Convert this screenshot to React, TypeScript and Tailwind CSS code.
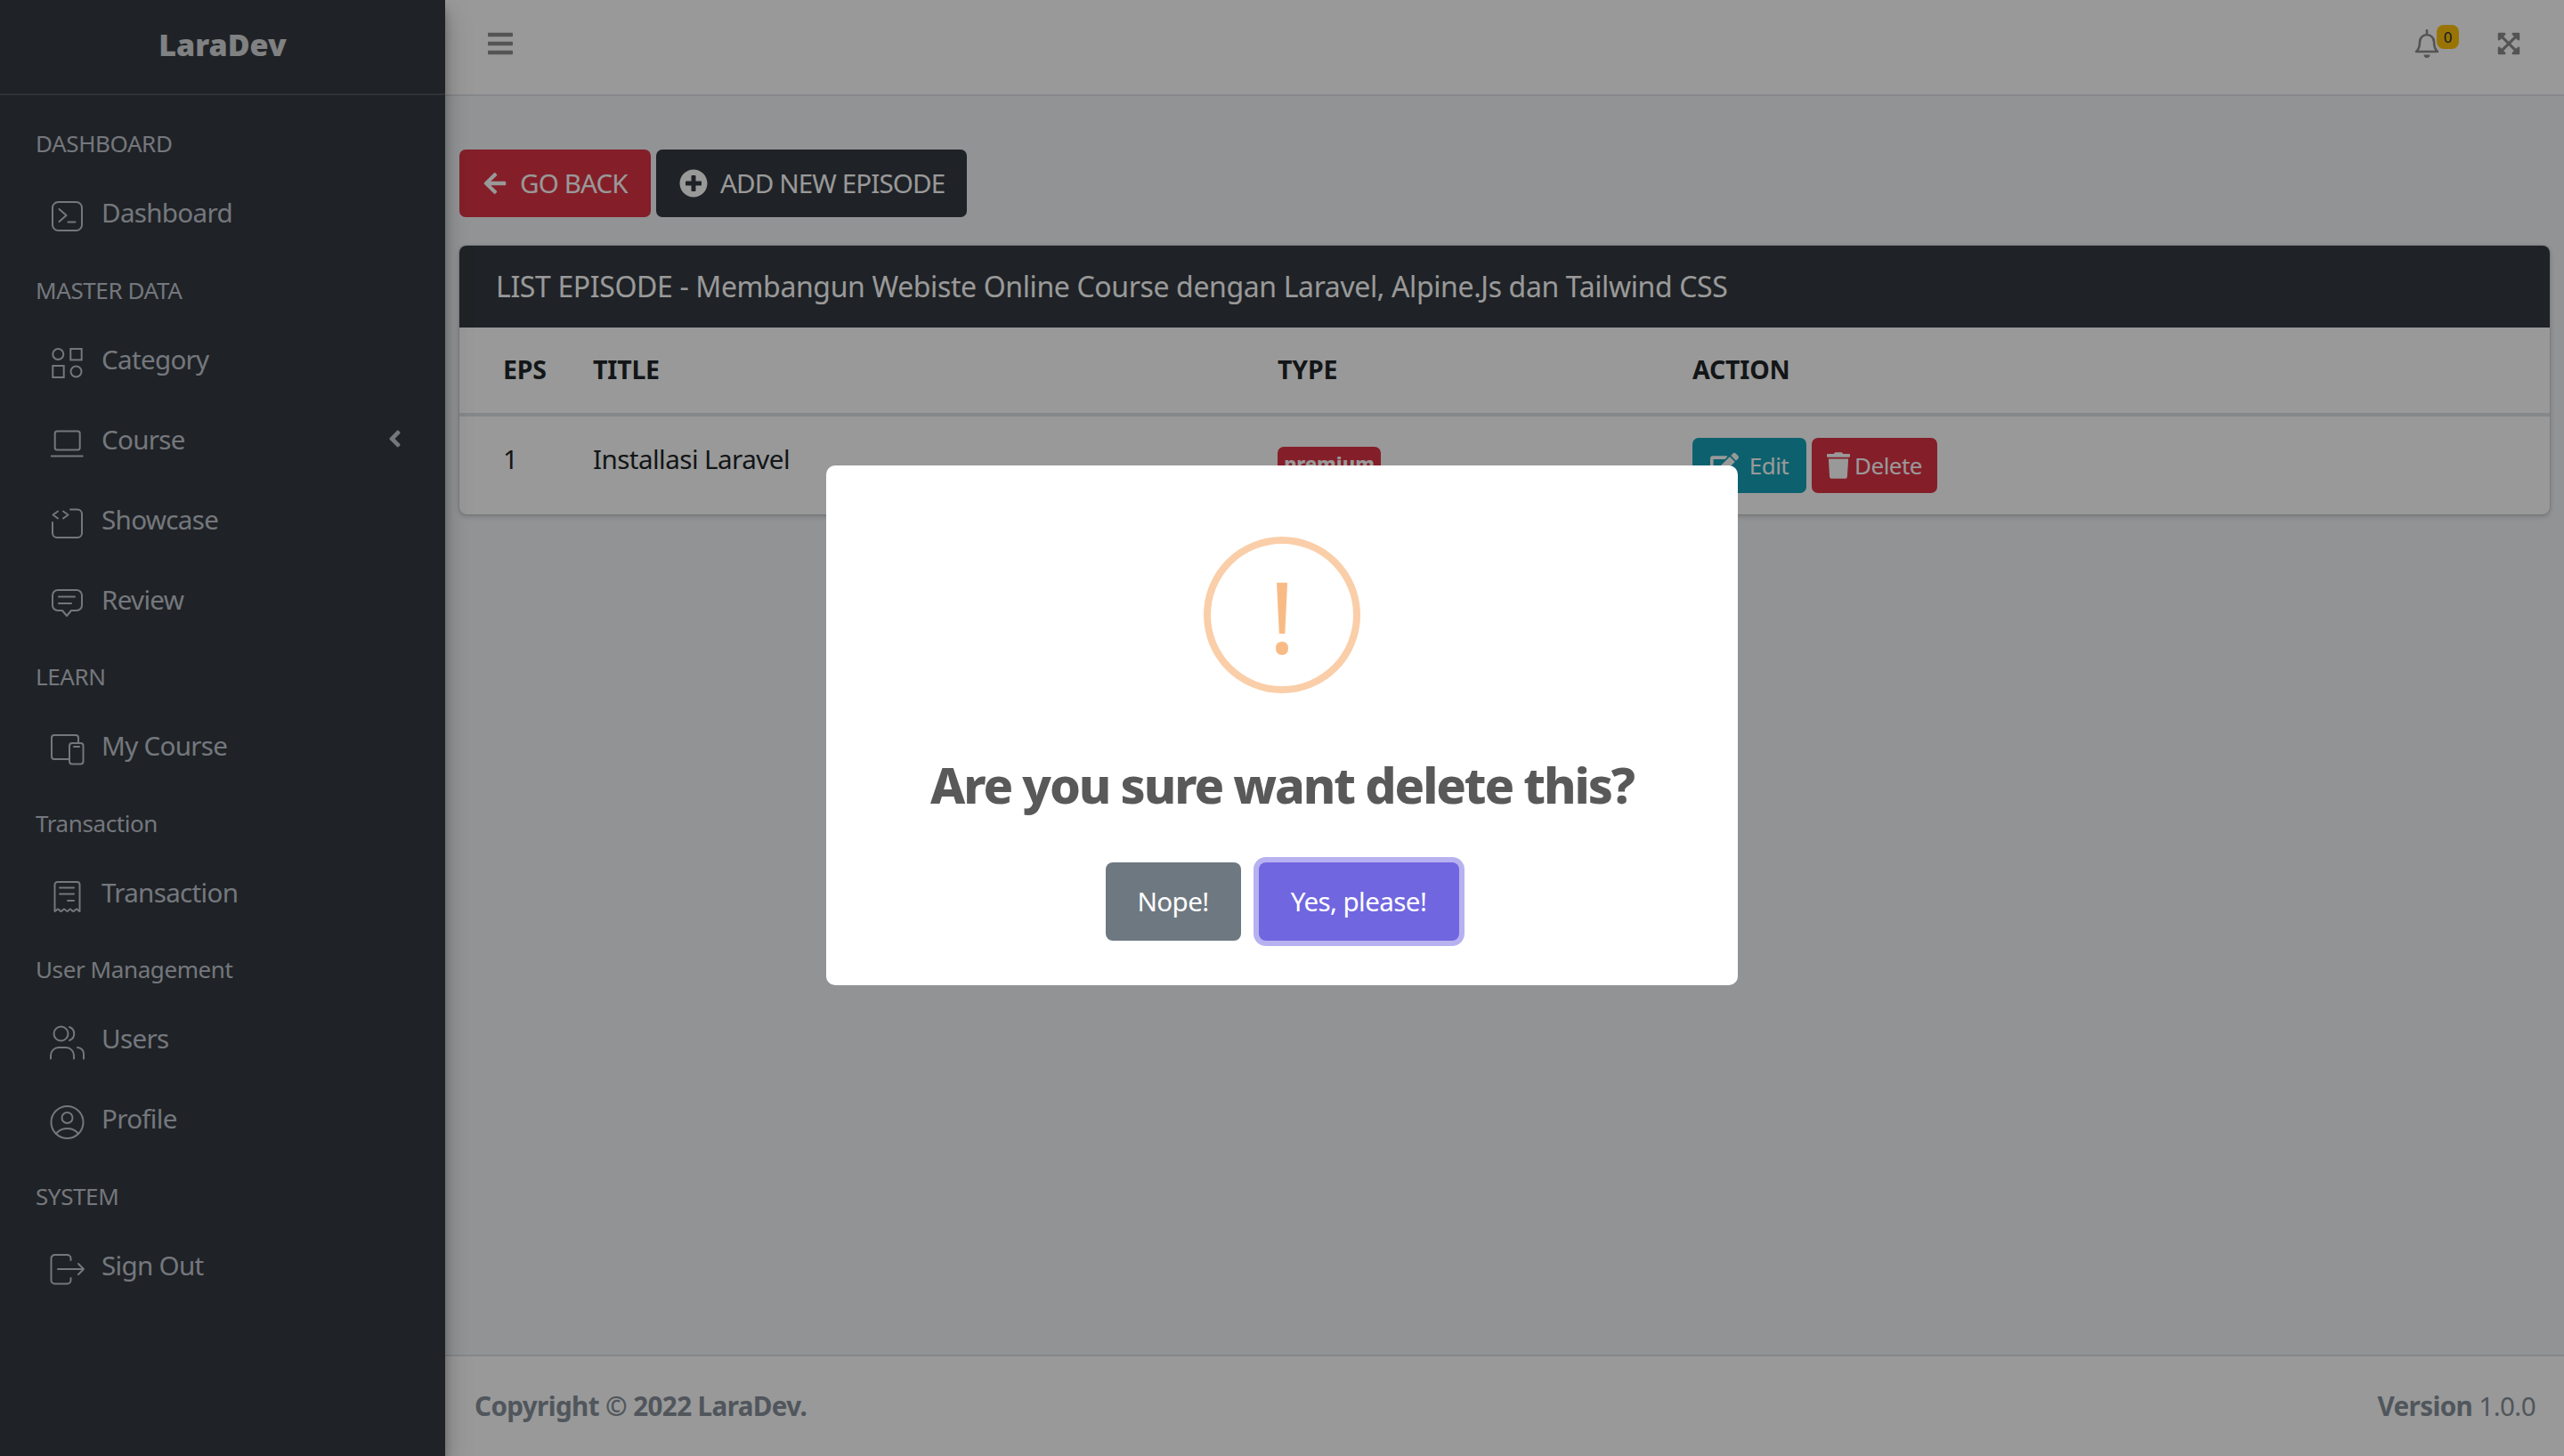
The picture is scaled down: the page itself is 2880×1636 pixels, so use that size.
import type { ReactNode } from 'react';
import {
  FaAngleLeft,
  FaArrowLeft,
  FaBars,
  FaEdit,
  FaExpandArrowsAlt,
  FaPlusCircle,
  FaTrash,
} from 'react-icons/fa';

function Glyph({ children }: { children: ReactNode }) {
  return (
    <svg viewBox="0 0 36 36" fill="none" stroke="currentColor" strokeWidth="2" strokeLinecap="round" strokeLinejoin="round" className="mt-[5px] h-[36px] w-[36px] shrink-0 overflow-visible">
      {children}
    </svg>
  );
}

const icons: Record<string, ReactNode> = {
  terminal: (
    <>
      <rect x="2" y="2" width="33" height="32" rx="6.5" />
      <path d="M9.500 10l8 7-8 7M19.500 24.500h8" />
    </>
  ),
  category: (
    <>
      <circle cx="8.300" cy="8" r="6" />
      <rect x="22.300" y="2" width="12.400" height="12.400" strokeLinejoin="miter" />
      <rect x="2.300" y="21" width="12.400" height="13" strokeLinejoin="miter" />
      <circle cx="28.500" cy="27.500" r="6" />
    </>
  ),
  laptop: (
    <>
      <rect x="4.700" y="4.500" width="28" height="21" rx="2.500" />
      <path d="M0 32.500h36.500" strokeLinecap="butt" />
    </>
  ),
  showcase: (
    <>
      <path d="M8 4.500L2.500 8.500 8 12.500M14 4.500l5.500 4-5.500 4" />
      <path d="M22 2.500h8a5 5 0 0 1 5 5V29a5 5 0 0 1-5 5H7a5 5 0 0 1-5-5V17" />
    </>
  ),
  review: (
    <>
      <path d="M8 3h21a6 6 0 0 1 6 6v11a6 6 0 0 1-6 6h-6l-5 6-5-6H8a6 6 0 0 1-6-6V9a6 6 0 0 1 6-6z" />
      <path d="M9 10.500h18M9 18h14" />
    </>
  ),
  devices: (
    <>
      <path d="M31 10V5a3 3 0 0 0-3-3H4a3 3 0 0 0-3 3v21a3 3 0 0 0 3 3h16" />
      <rect x="21" y="11" width="15.500" height="23.500" rx="3" />
      <path d="M26 15h6" />
    </>
  ),
  receipt: (
    <>
      <path d="M4.500 35V5a3 3 0 0 1 3-3h22a3 3 0 0 1 3 3v30c-1.500 0-2.300-2.500-3.500-2.500S26.500 35 25.300 35 23 32.500 21.800 32.500 19.500 35 18.500 35s-2.300-2.500-3.500-2.500S12.700 35 11.500 35 9.300 32.500 8 32.500 6 35 4.500 35z" />
      <path d="M10 8.500h16M10 15.500h16M19 23h7" />
    </>
  ),
  users: (
    <>
      <circle cx="11.500" cy="8.500" r="8" />
      <path d="M21 1a8 8 0 0 1 0 15" />
      <path d="M0 36.500V33a9 9 0 0 1 9-9h8a9 9 0 0 1 9 9v3.500M30 24a7 7 0 0 1 7 7.500v5" />
    </>
  ),
  profile: (
    <>
      <circle cx="18.500" cy="18" r="18" />
      <circle cx="18.500" cy="13" r="6" />
      <path d="M6 31c3-4 7.500-6 12.500-6s9.500 2 12.500 6" />
    </>
  ),
  logout: (
    <>
      <path d="M22.500 8V6a4 4 0 0 0-4-4H4.500a4 4 0 0 0-4 4v24.500a4 4 0 0 0 4 4h14a4 4 0 0 0 4-4V28" />
      <path d="M8 18h29M31 12l6 6-6 6" />
    </>
  ),
};

function SectionLabel({ label }: { label: string }) {
  return <div className="flex h-[74.5px] items-center pl-[40px] pt-[7px] text-[26px] tracking-[-0.4px] text-[#c2c7d0]">{label}</div>;
}

function NavItem({ icon, label, caret }: { icon: string; label: string; caret?: boolean }) {
  return (
    <div className="flex h-[90px] items-center pl-[57px] pr-[44px] text-[#c2c7d0]">
      <Glyph>{icons[icon]}</Glyph>
      <span className="mb-[2px] ml-[21px] text-[29.6px] tracking-[-0.7px]">{label}</span>
      {caret && <FaAngleLeft className="mb-[4px] ml-auto h-[30px] w-[25px]" />}
    </div>
  );
}

function Sidebar() {
  return (
    <aside className="relative z-10 flex w-[500px] shrink-0 flex-col bg-[#343a40] shadow-[0_14px_28px_rgba(0,0,0,0.25),0_10px_10px_rgba(0,0,0,0.22)]">
      <div className="flex h-[107px] shrink-0 items-center justify-center border-b-2 border-[#4b545c] pb-[5px] text-[34px] font-black text-white/80">
        LaraDev
      </div>
      <nav className="pt-[14px]">
        <SectionLabel label="DASHBOARD" />
        <NavItem icon="terminal" label="Dashboard" />
        <SectionLabel label="MASTER DATA" />
        <NavItem icon="category" label="Category" />
        <NavItem icon="laptop" label="Course" caret />
        <NavItem icon="showcase" label="Showcase" />
        <NavItem icon="review" label="Review" />
        <SectionLabel label="LEARN" />
        <NavItem icon="devices" label="My Course" />
        <SectionLabel label="Transaction" />
        <NavItem icon="receipt" label="Transaction" />
        <SectionLabel label="User Management" />
        <NavItem icon="users" label="Users" />
        <NavItem icon="profile" label="Profile" />
        <SectionLabel label="SYSTEM" />
        <NavItem icon="logout" label="Sign Out" />
      </nav>
    </aside>
  );
}

function Topbar() {
  return (
    <header className="flex h-[108px] shrink-0 items-center border-b-2 border-[#dee2e6] bg-white pb-[8px] pl-[47px] pr-[48px] text-[#8c8c8c]">
      <FaBars className="h-[32px] w-[30px]" />
      <div className="relative ml-auto mr-[64px]">
        <svg viewBox="0 0 28 32" className="h-[32px] w-[28px]" fill="none" stroke="currentColor" strokeWidth="2.6" strokeLinejoin="round">
          <path d="M14 1v3" strokeLinecap="round" />
          <path d="M2 25c2.500-2 4-4 4-11a8 8 0 0 1 16 0c0 7 1.500 9 4 11z" />
          <path d="M10.500 28.500a3.500 3.500 0 0 0 7 0z" fill="currentColor" stroke="none" />
        </svg>
        <span className="absolute left-[25px] top-[-5px] flex h-[27px] w-[25px] items-center justify-center rounded-[8px] bg-[#ffc107] text-[17px] text-[#1f2d3d]">0</span>
      </div>
      <FaExpandArrowsAlt className="h-[28px] w-[28px]" />
    </header>
  );
}

function EpisodeCard() {
  return (
    <div className="mt-[32px] overflow-hidden rounded-[8px] bg-white shadow-[0_0_2px_rgba(0,0,0,0.25),0_2px_6px_rgba(0,0,0,0.2)]">
      <div className="flex h-[92px] items-center bg-[#343a40] pl-[41px] text-[32px] tracking-[-0.38px] text-white">
        LIST EPISODE - Membangun Webiste Online Course dengan Laravel, Alpine.Js dan Tailwind CSS
      </div>
      <table className="w-full table-fixed text-left text-[#212529]">
        <colgroup>
          <col className="w-[125px]" />
          <col className="w-[769px]" />
          <col className="w-[466px]" />
          <col />
        </colgroup>
        <thead>
          <tr className="h-[98px] border-b-4 border-[#dee2e6] text-[28.5px] tracking-[-0.2px]">
            <th className="pb-[1px] pl-[49px] font-bold">EPS</th>
            <th className="pb-[1px] pl-[25px] font-bold">TITLE</th>
            <th className="pb-[1px] pl-[25px] font-bold">TYPE</th>
            <th className="pb-[1px] pl-[25px] font-bold">ACTION</th>
          </tr>
        </thead>
        <tbody>
          <tr className="h-[112px] text-[29.6px] tracking-[-0.55px]">
            <td className="pl-[49px] pt-[26px] align-top">1</td>
            <td className="pl-[25px] pt-[26px] align-top">Installasi Laravel</td>
            <td className="pl-[25px] pt-[28px] align-top">
              <span className="inline-flex h-[40px] w-[116px] items-center justify-center rounded-[7px] bg-[#dc3545] pb-[2px] text-[22px] font-extrabold tracking-normal text-white">premium</span>
            </td>
            <td className="pl-[25px] pt-[24px] align-top">
              <div className="flex gap-[6px]">
                <button className="flex h-[62px] w-[128px] items-center justify-center gap-[12px] rounded-[7px] bg-[#17a2b8] text-[26px] text-white">
                  <FaEdit className="h-[30px] w-[32px]" />
                  Edit
                </button>
                <button className="flex h-[62px] w-[141px] items-center justify-center gap-[5px] rounded-[7px] bg-[#dc3545] text-[26px] text-white">
                  <FaTrash className="h-[30px] w-[26px]" />
                  Delete
                </button>
              </div>
            </td>
          </tr>
        </tbody>
      </table>
    </div>
  );
}

function DeleteDialog() {
  return (
    <div className="fixed inset-0 z-20 flex items-center justify-center bg-black/40 pb-[6px]">
      <div className="flex h-[584px] w-[1024px] flex-col items-center rounded-[10px] bg-white pt-[80px]">
        <div className="flex h-[176px] w-[176px] items-center justify-center rounded-full border-[8px] border-[#facea8] text-[112px] leading-none text-[#f8bb86]">!</div>
        <h2 className="mt-[68px] text-[55.500px] font-extrabold leading-[70px] tracking-[-2.1px] text-[#595959]">Are you sure want delete this?</h2>
        <div className="mt-[52px] flex gap-[20px] tracking-[-0.6px]">
          <button className="h-[88px] w-[152px] rounded-[8px] bg-[#6e7881] text-[29.6px] text-white">Nope!</button>
          <button className="h-[88px] w-[225px] rounded-[8px] bg-[#7066e0] text-[29.6px] text-white ring-[6px] ring-[#7066e0]/50">Yes, please!</button>
        </div>
      </div>
    </div>
  );
}

export default function App() {
  return (
    <div className="flex h-screen w-full overflow-hidden bg-[#f4f6f9] font-['Noto_Sans',sans-serif]">
      <Sidebar />
      <div className="flex min-w-0 flex-1 flex-col">
        <Topbar />
        <main className="flex-1 px-[16px] pt-[60px]">
          <div className="flex gap-[6px] text-[29.6px] tracking-[-0.9px] text-white">
            <button className="flex h-[76px] w-[215px] items-center gap-[14px] rounded-[7px] bg-[#dc3545] pl-[26px]">
              <FaArrowLeft className="h-[28px] w-[28px]" />
              GO BACK
            </button>
            <button className="flex h-[76px] w-[349px] items-center gap-[14px] rounded-[7px] bg-[#343a40] pl-[26px]">
              <FaPlusCircle className="h-[32px] w-[32px]" />
              ADD NEW EPISODE
            </button>
          </div>
          <EpisodeCard />
        </main>
        <footer className="flex h-[114px] shrink-0 items-center justify-between border-t-2 border-[#dee2e6] bg-white pl-[33px] pr-[32px] text-[29.6px] tracking-[-0.6px] text-[#869099]">
          <strong>Copyright © 2022 LaraDev.</strong>
          <span>
            <strong>Version</strong> 1.0.0
          </span>
        </footer>
      </div>
      <DeleteDialog />
    </div>
  );
}
